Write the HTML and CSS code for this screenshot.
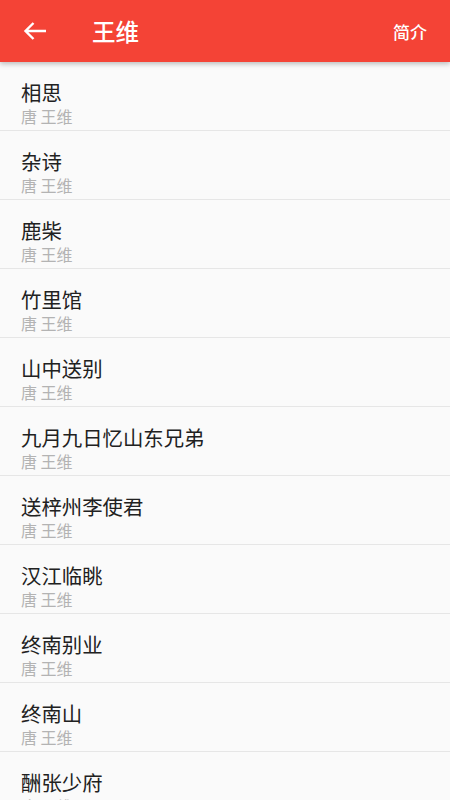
FILE: index.html
```html
<!DOCTYPE html>
<html lang="zh-CN">
<head>
<meta charset="utf-8">
<link rel="stylesheet" href="styles.css">
</head>
<body>
<header class="bar">
  <svg class="back" width="24" height="24" viewBox="0 0 24 24"><path d="M23 12H2.5M10.5 4L2.5 12L10.5 20" fill="none" stroke="#fff" stroke-width="2.4"/></svg>
  <div class="title">王维</div>
  <div class="action">简介</div>
</header>
<ul class="list">
  <li class="row"><div class="name">相思</div><div class="sub">唐 王维</div></li>
  <li class="row"><div class="name">杂诗</div><div class="sub">唐 王维</div></li>
  <li class="row"><div class="name">鹿柴</div><div class="sub">唐 王维</div></li>
  <li class="row"><div class="name">竹里馆</div><div class="sub">唐 王维</div></li>
  <li class="row"><div class="name">山中送别</div><div class="sub">唐 王维</div></li>
  <li class="row"><div class="name">九月九日忆山东兄弟</div><div class="sub">唐 王维</div></li>
  <li class="row"><div class="name">送梓州李使君</div><div class="sub">唐 王维</div></li>
  <li class="row"><div class="name">汉江临眺</div><div class="sub">唐 王维</div></li>
  <li class="row"><div class="name">终南别业</div><div class="sub">唐 王维</div></li>
  <li class="row"><div class="name">终南山</div><div class="sub">唐 王维</div></li>
  <li class="row"><div class="name">酬张少府</div><div class="sub">唐 王维</div></li>
</ul>
</body>
</html>
```
FILE: styles.css
```css
html, body {
  margin: 0;
  padding: 0;
  background: #fafafa;
  font-family: "Noto Sans CJK SC", "Noto Sans", sans-serif;
  overflow: hidden;
}
.bar {
  position: relative;
  z-index: 2;
  height: 62px;
  background: #f44336;
  display: flex;
  align-items: center;
  padding: 0 23px 0 23px;
  box-shadow: 0 2px 5px rgba(0,0,0,0.25);
  color: #fff;
}
.back {
  width: 24px;
  height: 24px;
  flex: none;
  margin-top: -1px;
}
.title {
  margin-left: 45px;
  font-size: 23.5px;
  font-weight: 500;
  flex: 1;
}
.action {
  font-size: 17px;
  font-weight: 500;
}
.list {
  list-style: none;
  margin: 0;
  padding: 0;
}
.row {
  padding: 17px 21px 4px;
  border-bottom: 1px solid #e6e6e6;
  height: 47px;
}
.name {
  font-size: 20.4px;
  line-height: 26px;
  color: #212121;
}
.sub {
  margin-top: 1px;
  font-size: 16px;
  line-height: 20px;
  color: #b3b3b3;
}
```
